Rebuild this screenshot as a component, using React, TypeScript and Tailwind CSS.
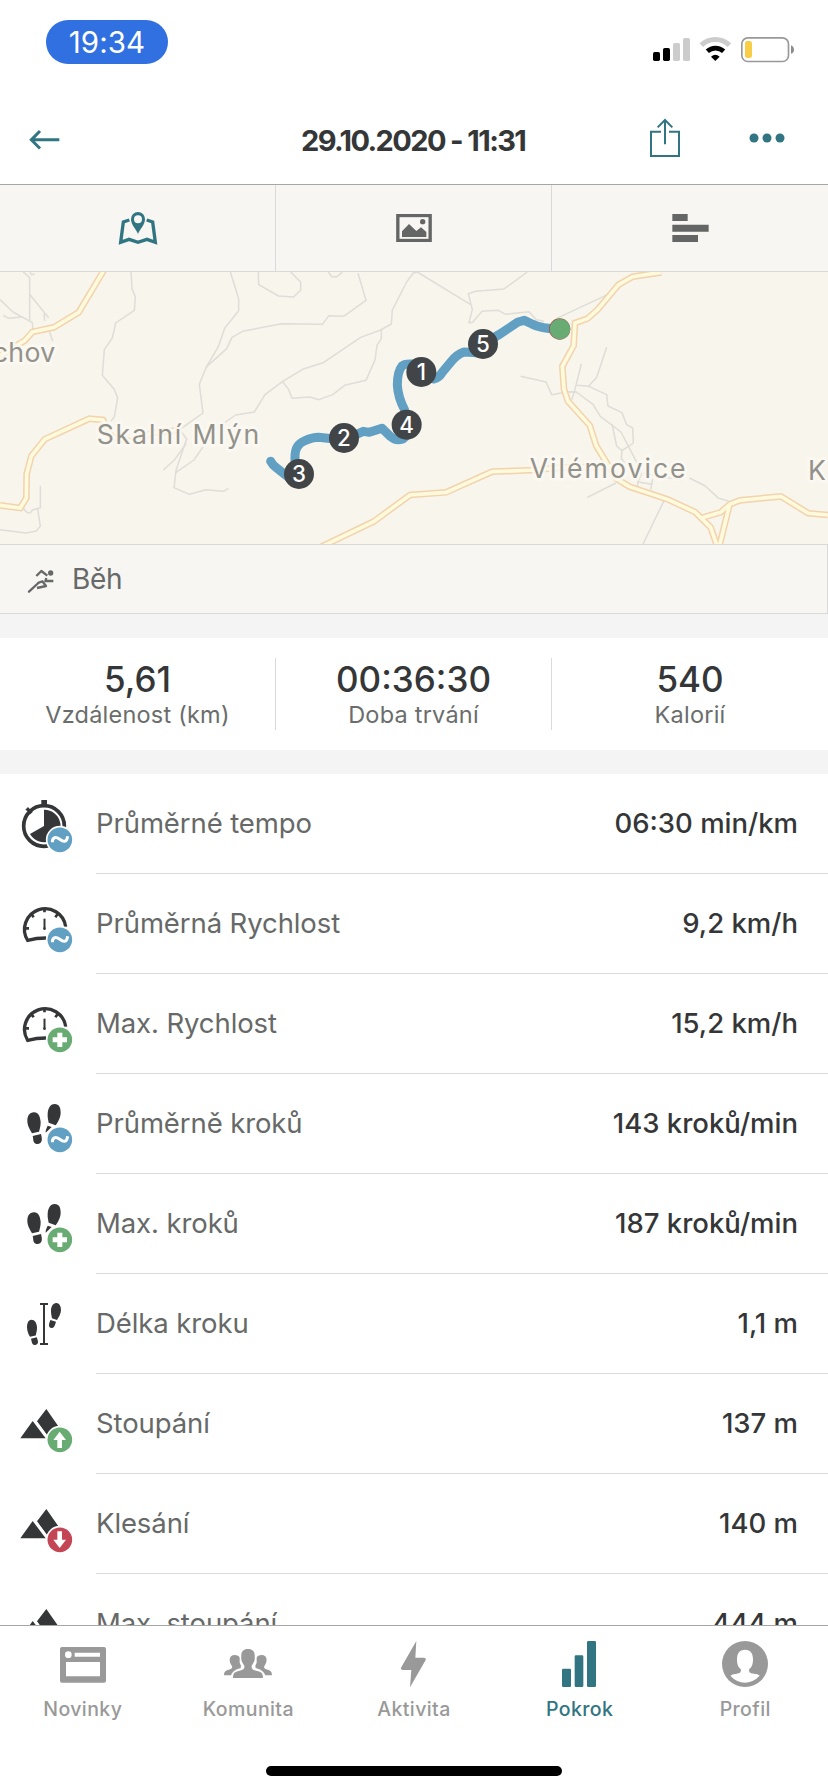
import type { ReactNode } from "react";

/* ---------- Status bar ---------- */

function StatusBar() {
  return (
    <div className="flex h-[92px] shrink-0 items-start justify-between pl-[46px] pr-[33px]">
      <div className="mt-5 flex h-11 w-[122px] items-center justify-center rounded-[22px] bg-[#3070e0] text-[29.5px] tracking-[0.1px] text-white">
        19:34
      </div>
      <svg className="mt-[37px] h-[26px] w-[142px]" viewBox="717 111 426 78">
        <g fill="#000">
          <rect x="717" y="156" width="21" height="27" rx="5" />
          <rect x="747" y="144" width="21" height="39" rx="5" />
        </g>
        <g fill="#ccc">
          <rect x="777" y="129" width="21" height="54" rx="5" />
          <rect x="807" y="114" width="21" height="69" rx="5" />
        </g>
        <path d="M862 136a60 60 0 0 1 84 0" fill="none" stroke="#ccc" strokeWidth="15" />
        <path d="M880 154a36 36 0 0 1 49 0" fill="none" stroke="#000" strokeWidth="14" />
        <path d="M891 170q13-11 26 0l-13 13z" fill="#000" />
        <rect x="983.500" y="113.500" width="140" height="71" rx="18" fill="#fff" stroke="#999" strokeWidth="5" />
        <rect x="993" y="123" width="21" height="51" rx="7" fill="#f7ce46" />
        <path d="M1131 136q9 4 9 13t-9 12z" fill="#8c8c8c" />
      </svg>
    </div>
  );
}

/* ---------- Header ---------- */

function Header() {
  return (
    <header className="flex h-[93px] shrink-0 items-center border-b border-[#a5a7a5] px-7">
      <svg className="mt-1 h-[22px] w-[38px]" viewBox="84 389 114 66">
        <path d="M178 421.500H94M120 395L94 421.500l26 26" fill="none" stroke="#307581" strokeWidth="9" />
      </svg>
      <h1 className="ml-[235px] mt-[5px] w-[226px] text-[29px] font-bold leading-none tracking-[-1.6px] whitespace-nowrap text-[#343637]">
        29.10.2020 - 11:31
      </h1>
      <svg className="ml-[121px] h-10 w-[34px]" viewBox="702 355 102 120">
        <g fill="none" stroke="#307581" strokeWidth="6">
          <path d="M741 396h-30v73h84v-73h-30" />
          <path d="M753 434v-72M731 383l22-22 22 22" />
        </g>
      </svg>
      <svg className="ml-[67px] h-3 w-9" viewBox="1005 399 108 36">
        <g fill="#307581">
          <circle cx="1020" cy="417" r="13.500" />
          <circle cx="1059" cy="417" r="13.500" />
          <circle cx="1098" cy="417" r="13.500" />
        </g>
      </svg>
    </header>
  );
}

/* ---------- View switcher ---------- */

function ViewTabs() {
  return (
    <div className="grid h-[87px] shrink-0 grid-cols-[276px_276px_276px] border-b border-[#d9dad7] bg-[#f7f6f3]">
      <div className="flex items-center justify-center border-r border-[#d9dad7]">
        <svg className="mt-[-1px] h-[34px] w-[40px]" viewBox="354 630 120 102">
          <path
            d="M388 657l-18 6-8 61 25-9 27 9 27-9 25 9-8-61-18-6"
            fill="none"
            stroke="#307581"
            strokeWidth="10"
          />
          <path
            fill="#307581"
            fillRule="evenodd"
            d="M414 699c-5-15-21-26-21-45a21 21 0 0 1 42 0c0 19-16 30-21 45zM414 643a12 12 0 1 0 0 24a12 12 0 0 0 0-24z"
          />
        </svg>
      </div>
      <div className="flex items-center justify-center border-r border-[#d9dad7]">
        <svg className="h-[28px] w-[36px]" viewBox="1188 642 108 84">
          <rect x="1193.500" y="646.500" width="97" height="75" fill="none" stroke="#636665" strokeWidth="10" />
          <path d="M1206 711v-17l21-22 22 21 14-11 16 14v15z" fill="#636665" />
          <circle cx="1268" cy="665" r="8" fill="#636665" />
        </svg>
      </div>
      <div className="flex items-center justify-center">
        <svg className="h-[28px] w-[37px]" viewBox="774 642 111 84">
          <g fill="#636665">
            <path d="M775 642h46v21h-46zM775 674h109v21H775zM775 705h77v21h-77z" />
          </g>
        </svg>
      </div>
    </div>
  );
}

/* ---------- Map ---------- */

const paths = [
  "M70 36l19 17v130M89 103l45 56 12 14M134 183l-2-22M0 119l39 37 58 32 2 28M10 166l16 9 38-4M148 214l10 30M90 36l4 8 10-2",
  "M393 36l3 50 10 25-3 40-56 38-10 45-24 35-6 77 35 41 11 26-10 57-10 14",
  "M691 36l25 80v36l-42 53-19 55-37 63-20 50 11 86-70 50 21 28-32 94-6 52 46 20 50-14 52 5 15-9",
  "M618 322l62-56 16-34 32-18 117-23 122 2 20-26 44 2 67-48-24-81",
  "M775 36l1 38 60 34 45 3 21-21V66l-30-30M985 36l10 14h16l16-14",
  "M1242 36l-22 30-43 84-3 42-32 18-60 22-112 76-58 18-64 38-53 40-32 52-56 9-66 45M559 550l-36 50-33 30",
  "M1144 208v28l-13 20-6 44-27 61-64 15-36 28-41 15-28-8-53 4-10-26-18-24",
  "M612 556l-30 44-55 38",
  "M69 742q17 30 28 8l24-7v-66M113 746l8 53-12 14-31 6-78-10",
  "M1242 39l10-3 164 100M1582 36l-70 51-85 7-22 7 12 48-10 39 11-1 28-33 49-3 22 12 70-8 22 24 20 4v6M1670 175l172-80",
  "M1562 349l76 17 17 38 50-9 24 1 50 37 22 36 62 47 54 104M1744 312l-20 80-9 27M1820 262l-30 90-24 27 54 25 4 34 42 20 14 36 18 10 2 45-34 23-2 24 14 17",
  "M1730 376l38 3M1836 492l14 66 16 14M1762 712l86-43M1992 722l-63 130M1918 625l6 18-10 20-2 20M1912 665l42 8M1958 657l-6 32M1930 640l115 20M2068 654l48 24 40 37 30 8",
];

const roads = [
  "M312 30l-76 127-74 45-65 14-22 25-75 46",
  "M0 736l61 8 18-30 1-72 14-54 40-50 134-62 41 4 26 50 64 16 56-28 85-8",
  "M960 862l162-78 108-79 108-8 139-62 128-5 82-8 148-1",
  "M1984 37l-86 13-42 24-64 76-30 26-37 13-4 68-34 62 5 69 12 36 65 72 20 62 60 98 39 24 115 38 82 38 47 46 20 58",
  "M2106 773l56-16 27-24 31-12 123-12 82 51 59 5M2189 733l-32 130",
];

const markers = [
  { label: "1", x: 1264, y: 336 },
  { label: "2", x: 1032, y: 534 },
  { label: "3", x: 897, y: 642 },
  { label: "4", x: 1220, y: 494 },
  { label: "5", x: 1449, y: 252 },
];

const places = [
  { name: "chov", x: -22, y: 307, width: 188 },
  { name: "Skalní Mlýn", x: 290, y: 553, width: 488 },
  { name: "Vilémovice", x: 1589, y: 654, width: 468 },
];

function RouteMap() {
  return (
    <svg className="block h-[272px] w-[828px] shrink-0 bg-[#f8f5ec]" viewBox="0 36 2484 816">
      <g fill="none" stroke="#deddd7" strokeWidth="4.500" strokeLinejoin="round">
        {paths.map((d) => (
          <path key={d} d={d} />
        ))}
      </g>
      <g fill="none" stroke="#f1d3ae" strokeWidth="20">
        {roads.map((d) => (
          <path key={d} d={d} />
        ))}
      </g>
      <g fill="none" stroke="#fefadb" strokeWidth="11">
        {roads.map((d) => (
          <path key={d} d={d} />
        ))}
      </g>

      {/* Place names with a light halo */}
      <g
        className="font-[Inter,sans-serif] text-[80px]"
        fill="#92918b"
        stroke="#fbf9f3"
        strokeOpacity="0.85"
        strokeWidth="18"
        strokeLinejoin="round"
        paintOrder="stroke"
      >
        {places.map((p) => (
          <text key={p.name} x={p.x} y={p.y} textLength={p.width}>
            {p.name}
          </text>
        ))}
        <text x="2424" y="661">
          K
        </text>
      </g>

      {/* Track */}
      <path
        d="M812 604Q818 616 830 624L866 652L897 642L885 600Q884 572 892 560Q900 548 915 542Q938 532 955 532L1032 540L1090 514L1108 517L1146 505L1172 530Q1188 544 1208 537L1222 525L1214 450Q1194 412 1192 375Q1192 335 1206 318Q1214 310 1240 312L1264 336L1302 357Q1318 352 1326 338L1356 302Q1370 284 1392 276L1430 278L1449 252L1500 222L1554 186L1573 181L1596 192Q1620 206 1680 207"
        fill="none"
        stroke="#619fc3"
        strokeWidth="27"
        strokeLinecap="round"
        strokeLinejoin="round"
      />
      <circle cx="1679" cy="207" r="32" fill="#a44d50" />
      <circle cx="1680" cy="207" r="31" fill="#68ac73" />
      {markers.map((m) => (
        <g key={m.label}>
          <circle cx={m.x} cy={m.y} r="45" fill="#424548" />
          <text
            x={m.x}
            y={m.y + 24}
            textAnchor="middle"
            fill="#fff"
            className="font-[Inter,sans-serif] text-[67px] font-medium"
          >
            {m.label}
          </text>
        </g>
      ))}
    </svg>
  );
}

function ActivityBar() {
  return (
    <div className="flex h-[70px] shrink-0 items-center border-y border-r border-[#d9dad7] bg-[#f7f6f3] pl-[26px]">
      <svg className="mt-1 h-[30px] w-[30px]" viewBox="78 78 90 90">
        <g fill="none" stroke="#666968" strokeWidth="7" strokeLinejoin="round">
          <path d="M109 108l15-15 18 14" />
          <path d="M139 114l-3 9h24" />
          <path d="M87 155l28-26" strokeLinecap="round" />
          <path d="M113 129l14-5 11 14-27 6" />
        </g>
        <circle cx="152" cy="99" r="8" fill="#666968" />
      </svg>
      <span className="ml-[16px] text-[28px] leading-none tracking-[-0.3px] text-[#666968]">Běh</span>
    </div>
  );
}

/* ---------- Summary ---------- */

const summary = [
  { value: "5,61", label: "Vzdálenost (km)" },
  { value: "00:36:30", label: "Doba trvání" },
  { value: "540", label: "Kalorií" },
];

function Summary() {
  return (
    <div className="h-[160px] shrink-0 bg-[#f4f4f4] py-6">
      <div className="grid h-[112px] grid-cols-[276px_276px_276px] bg-white py-5">
        {summary.map((s) => (
          <div
            key={s.label}
            className="flex h-[72px] flex-col items-center border-r border-[#d9dad9] last:border-r-0"
          >
            <div className="mt-[2px] h-[39px] text-[35px] font-medium leading-[38px] text-[#343637]">{s.value}</div>
            <div className="h-[34px] text-[23.500px] leading-[34px] tracking-[0.22px] text-[#6a6d6c]">{s.label}</div>
          </div>
        ))}
      </div>
    </div>
  );
}

/* ---------- Detail rows ---------- */

type BadgeKind = "avg" | "max" | "up" | "down";

function Badge({ kind }: { kind: BadgeKind }) {
  const fill = kind === "avg" ? "#619fc3" : kind === "down" ? "#c44553" : "#68ac73";
  return (
    <g>
      <circle cx="179.500" cy="179.500" r="42" fill="#fff" />
      <circle cx="179.500" cy="179.500" r="37" fill={fill} />
      {kind === "avg" && (
        <path d="M157 187C157 170 168 170 179 178S200 189 203 169" fill="none" stroke="#fff" strokeWidth="9" />
      )}
      {kind === "max" && <path d="M179.500 158v43M158 179.500h43" stroke="#fff" strokeWidth="15" />}
      {kind === "up" && <path d="M179 155l19 25h-12v24h-14v-24h-12z" fill="#fff" />}
      {kind === "down" && <path d="M179 204l19-25h-12v-25h-14v25h-12z" fill="#fff" />}
    </g>
  );
}

function Stopwatch() {
  return (
    <g>
      <circle cx="132" cy="138" r="61" fill="none" stroke="#343637" strokeWidth="11" />
      <path d="M132 138V89a49 49 0 1 1-42 73z" fill="#343637" />
      <path d="M124 60h17v16h-17zM76 89l8-8 6 7 8 8-7 7-9-10z" fill="#343637" />
    </g>
  );
}

function Speedometer() {
  return (
    <g fill="none" stroke="#343637">
      <path d="M197 140a62 62 0 1 0-114 41q26-7 55-7" strokeWidth="10" />
      <path d="M133.500 84v13M94 102l7 10M173 102l-7 10M76 145h11" strokeWidth="8" />
      <path d="M133.500 116v30" strokeWidth="6" />
      <circle cx="133.500" cy="146" r="4" fill="#343637" stroke="none" />
    </g>
  );
}

// Left shoe print, sole and heel
const SOLE = "M102 97c14 0 19 15 20 29 0 14-3 21-5 29l-21 5c-5-10-14-22-14-37 0-14 6-26 20-26z";
const HEEL = "M98 168l25-6c3 12 5 22-3 28-6 4-16 2-19-5-2-5-1-11-3-17z";

function Steps() {
  return (
    <g fill="#343637">
      <path d={SOLE} />
      <path d={HEEL} />
      <path d="M164 72c-14 0-20 14-21 29-1 11 2 19 3 27l21 8c6-9 15-23 15-38 0-14-4-26-18-26z" />
      <path d="M143 137l12 4-18 17c-1-8 3-14 6-21z" />
    </g>
  );
}

function StepLength() {
  return (
    <g fill="#343637">
      <path d="M94 119.500c11 0 16 10 17 23 0 10-2 17-4 24l-17 4c-4-7-9-17-9-29 0-11 4-22 13-22z" />
      <path d="M93 176l17-4c3 9 7 16 1 21-5 4-13 2-15-4z" />
      <path d="M169 69c-11 0-16 12-16 24 0 9 2 15 3 22l15 5c5-8 12-18 12-30 0-11-5-21-14-21z" />
      <path d="M151 120l17 5c-3 10-5 18-12 19-6 1-10-4-9-11z" />
      <path d="M120 69h24v6h-9v114h9v6h-24v-6h9V75h-9z" />
    </g>
  );
}

function Mountains() {
  return (
    <g fill="#343637">
      <path d="M139 87l37 53-26 38-5-8-34-46z" />
      <path d="M98 123l39 52H61z" />
      <path d="M104 120l40 54" stroke="#fff" strokeWidth="5" />
    </g>
  );
}

type Row = { label: string; value: string; icon: ReactNode; badge?: BadgeKind };

const rows: Row[] = [
  { label: "Průměrné tempo", value: "06:30 min/km", icon: <Stopwatch />, badge: "avg" },
  { label: "Průměrná Rychlost", value: "9,2 km/h", icon: <Speedometer />, badge: "avg" },
  { label: "Max. Rychlost", value: "15,2 km/h", icon: <Speedometer />, badge: "max" },
  { label: "Průměrně kroků", value: "143 kroků/min", icon: <Steps />, badge: "avg" },
  { label: "Max. kroků", value: "187 kroků/min", icon: <Steps />, badge: "max" },
  { label: "Délka kroku", value: "1,1 m", icon: <StepLength /> },
  { label: "Stoupání", value: "137 m", icon: <Mountains />, badge: "up" },
  { label: "Klesání", value: "140 m", icon: <Mountains />, badge: "down" },
  { label: "Max. stoupání", value: "444 m", icon: <Mountains /> },
];

function DetailList() {
  return (
    <div className="min-h-0 flex-1 overflow-hidden">
      {rows.map((row) => (
        <div key={row.label} className="flex h-[100px] items-center pl-[18px]">
          <svg className="h-[60px] w-[60px] shrink-0" viewBox="54 42 180 180">
            {row.icon}
            {row.badge && <Badge kind={row.badge} />}
          </svg>
          <div className="ml-[18px] flex h-full flex-1 items-center justify-between border-b border-[#d9dad9] pr-[30px] text-[27.500px]">
            <span className="tracking-[-0.1px] text-[#666968]">{row.label}</span>
            <span className="font-medium text-[#343637]">{row.value}</span>
          </div>
        </div>
      ))}
    </div>
  );
}

/* ---------- Bottom navigation ---------- */

const nav = [
  {
    label: "Novinky",
    viewBox: "171 93 156 138",
    icon: (
      <path
        fillRule="evenodd"
        d="M186 111h126q6 0 6 6v95q0 6-6 6H186q-6 0-6-6v-95q0-6 6-6zM205 124a10 10 0 1 0 0 20a10 10 0 0 0 0-20zM224 128v12h76v-12zM198 156v43h102v-43z"
      />
    ),
  },
  {
    label: "Komunita",
    viewBox: "666 93 156 138",
    icon: (
      <g>
        <path d="M744 117c14 0 21 8 20 22 2 14-4 21-9 28-2 13 8 13 20 17 11 3 14 9 14 20h-90c0-11 3-17 14-20 12-4 22-4 20-17-5-7-11-14-9-28-1-14 6-22 20-22z" />
        <path d="M704 135c8 0 13 3 15 8v15l4 9-1 7c-12 3-24 9-29 22h-21c0-14 8-14 18-18 8-2 8-8 4-13-8-12-7-30 10-30z" />
        <path d="M785 135c-8 0-13 3-15 8v15l-4 9 1 7c12 3 24 9 29 22h20c0-14-7-14-17-18-8-2-8-8-4-13 8-12 7-30-10-30z" />
      </g>
    ),
  },
  {
    label: "Aktivita",
    viewBox: "1163 93 156 138",
    icon: <path d="M1248 93l-46 80q-2 7 5 7h26l-4 52 47-82q2-6-5-7h-26z" />,
  },
  {
    label: "Pokrok",
    viewBox: "417 93 156 138",
    icon: (
      <g>
        <rect x="441" y="176" width="27" height="55" rx="4" />
        <rect x="479" y="136" width="26" height="95" rx="4" />
        <rect x="516" y="93" width="27" height="138" rx="4" />
      </g>
    ),
  },
  {
    label: "Profil",
    viewBox: "912 93 156 138",
    icon: (
      <g>
        <circle cx="990" cy="162" r="69" />
        <path
          fill="#fff"
          d="M990 119c17 0 24 12 24 29s-5 25-11 29c-4 13 7 13 14 14 9 1 19 4 16 7-24 26-62 27-86 0 0-4 12-6 18-7 9-1 15-4 12-14-6-4-11-12-11-29s7-29 24-29z"
        />
      </g>
    ),
  },
];

function BottomNav() {
  return (
    <nav className="h-[167px] shrink-0 border-t border-[#a5a7a5] bg-white">
      <div className="grid h-[144px] grid-cols-5">
        {nav.map((item) => (
          <div
            key={item.label}
            className={`flex flex-col items-center pt-[15px] ${
              item.label === "Pokrok" ? "text-[#307581]" : "text-[#999]"
            }`}
          >
            <svg className="h-[46px] w-[52px]" viewBox={item.viewBox} fill="currentColor">
              {item.icon}
            </svg>
            <span className="mt-[8px] text-[19.500px] font-medium leading-7 tracking-[0.4px]">{item.label}</span>
          </div>
        ))}
      </div>
      <div className="relative -top-1 mx-auto h-[10px] w-[296px] rounded-full bg-black" />
    </nav>
  );
}

export default function App() {
  return (
    <div className="flex h-[1792px] w-[828px] flex-col overflow-hidden bg-white font-[Inter,sans-serif]">
      <StatusBar />
      <Header />
      <ViewTabs />
      <RouteMap />
      <ActivityBar />
      <Summary />
      <DetailList />
      <BottomNav />
    </div>
  );
}
